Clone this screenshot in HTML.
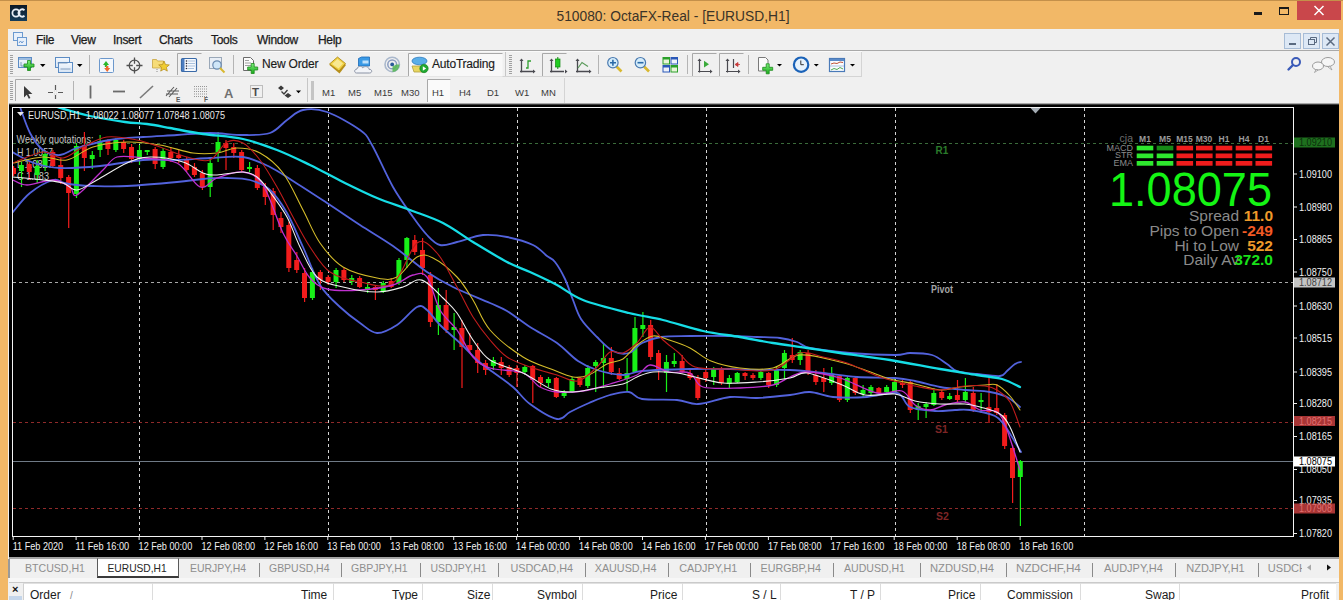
<!DOCTYPE html>
<html><head><meta charset="utf-8">
<style>
*{margin:0;padding:0;box-sizing:border-box}
html,body{width:1343px;height:600px;overflow:hidden;background:#f0f0f0;font-family:"Liberation Sans",sans-serif}
.a{position:absolute}
.t{position:absolute;white-space:nowrap;line-height:1}
#frame{left:0;top:0;width:1343px;height:600px;background:#f2b867}
#client{left:8px;top:29px;width:1331px;height:571px;background:#f0f0f0}
.menu{font-size:12px;color:#1b1b1b;top:34px;letter-spacing:-0.3px;-webkit-text-stroke:0.25px #1b1b1b}
.tbt{font-size:12px;color:#1b1b1b;letter-spacing:-0.2px;-webkit-text-stroke:0.15px #1b1b1b}
.tf{font-size:9.5px;color:#3a3a3a;top:88px;font-weight:normal}
.ax{font-size:10px;color:#fff;left:1299px}
.tm{font-size:10px;color:#fff;top:541px}
.tab{font-size:11.2px;color:#8c8c8c;top:563px;letter-spacing:-0.4px}
.hd{font-size:12px;color:#1b1b1b;top:589px}
.sep{position:absolute;width:1px;background:#c8c8c8}
.vs{position:absolute;width:1px;background:#dcdcdc;top:583px;height:17px}
.tsep{position:absolute;width:1px;height:14px;background:#8a8a8a;top:564px}
</style></head><body>
<div class="a" id="frame"></div>
<div class="a" style="left:0;top:0;width:1343px;height:1px;background:#c4904a"></div>
<svg class="a" style="left:0;top:0" width="1343" height="29"><text x="556.5" y="20.8" font-family="Liberation Sans" font-size="15.3" fill="#3a3328" textLength="233" lengthAdjust="spacingAndGlyphs">510080: OctaFX-Real - [EURUSD,H1]</text></svg>
<!-- app logo -->
<div class="a" style="left:10px;top:5px;width:17px;height:16px;background:linear-gradient(#0b1826,#163d5a)"></div>
<svg class="a" style="left:10px;top:5px" width="17" height="16"><circle cx="6" cy="8" r="3.6" fill="none" stroke="#e8eef5" stroke-width="1.8"/><path d="M14.5 5.2 A3.6 3.6 0 1 0 14.5 10.8" fill="none" stroke="#e8eef5" stroke-width="1.8"/></svg>
<!-- window controls -->
<div class="a" style="left:1254px;top:12px;width:8px;height:3px;background:#1a1a1a"></div>
<div class="a" style="left:1279px;top:7px;width:10px;height:8px;border:1px solid #1a1a1a;border-top-width:2px"></div>
<div class="a" style="left:1297px;top:1px;width:44px;height:19px;background:#c9474b"></div>
<svg class="a" style="left:1313px;top:5px" width="12" height="11"><path d="M1.5 1 L10.5 10 M10.5 1 L1.5 10" stroke="#fff" stroke-width="1.5"/></svg>

<div class="a" id="client"></div>
<!-- menu bar -->

<svg class="a" style="left:12px;top:31px" width="16" height="16"><rect x="1.5" y="1.5" width="9" height="8" fill="#e8f0fa" stroke="#6c9ad0"/><rect x="5.5" y="6.5" width="9" height="8" fill="#e8f0fa" stroke="#6c9ad0"/><path d="M7 12 l1.5 -2 l1.5 2 l1.5-2" stroke="#6c9ad0" fill="none"/></svg>
<div class="t menu" style="left:36px">File</div>
<div class="t menu" style="left:71px">View</div>
<div class="t menu" style="left:113px">Insert</div>
<div class="t menu" style="left:159px">Charts</div>
<div class="t menu" style="left:211px">Tools</div>
<div class="t menu" style="left:257px">Window</div>
<div class="t menu" style="left:318px">Help</div>
<div class="a" style="left:1284px;top:33px;width:17px;height:16px;background:#dde8f5;border:1px solid #a7bcd6"></div>
<div class="a" style="left:1303px;top:33px;width:17px;height:16px;background:#dde8f5;border:1px solid #a7bcd6"></div>
<div class="a" style="left:1322px;top:33px;width:17px;height:16px;background:#dde8f5;border:1px solid #a7bcd6"></div>
<div class="a" style="left:1289px;top:43px;width:7px;height:2px;background:#5a6a80"></div>
<svg class="a" style="left:1306px;top:35px" width="12" height="12"><rect x="2.5" y="4.5" width="6" height="5" fill="none" stroke="#5a6a80"/><path d="M4.5 4.5 V2.5 H10.5 V7.5 H8.5" fill="none" stroke="#5a6a80"/></svg>
<svg class="a" style="left:1325px;top:36px" width="11" height="11"><path d="M1.5 1.5 L9.5 9.5 M9.5 1.5 L1.5 9.5" stroke="#5a6a80" stroke-width="1.5"/></svg>

<!-- toolbars -->
<div class="a" style="left:8px;top:50px;width:1331px;height:53px;background:#f0f0f0"></div>
<div class="a" style="left:8px;top:50px;width:1331px;height:1px;background:#a9a9a9"></div>
<div class="a" style="left:8px;top:76px;width:854px;height:1px;background:#d4d4d4"></div>
<div class="a" style="left:861px;top:52px;width:1px;height:25px;background:#d4d4d4"></div>
<div class="a" style="left:564px;top:78px;width:1px;height:25px;background:#d4d4d4"></div>
<svg class="a" style="left:0;top:0" width="1343" height="104">
<defs>
<linearGradient id="gplus" x1="0" y1="0" x2="0" y2="1"><stop offset="0" stop-color="#7df07d"/><stop offset="1" stop-color="#18a818"/></linearGradient>
<linearGradient id="win" x1="0" y1="0" x2="0" y2="1"><stop offset="0" stop-color="#f4f8fd"/><stop offset="1" stop-color="#d6e4f4"/></linearGradient>
</defs>
<!-- toolbar row borders -->
<line x1="8" y1="51.5" x2="862" y2="51.5" stroke="#fafafa"/>
<line x1="505.5" y1="52" x2="505.5" y2="76" stroke="#c6c6c6"/>
<line x1="307.5" y1="78" x2="307.5" y2="102" stroke="#c6c6c6"/>
<!-- grips -->
<g stroke="#a0a0a0" stroke-width="1">
<path d="M10 55.5h3M10 57.5h3M10 59.5h3M10 61.5h3M10 63.5h3M10 65.5h3M10 67.5h3M10 69.5h3M10 71.5h3M10 73.5h3"/>
<path d="M509 55.5h3M509 57.5h3M509 59.5h3M509 61.5h3M509 63.5h3M509 65.5h3M509 67.5h3M509 69.5h3M509 71.5h3M509 73.5h3"/>
<path d="M10 81.5h3M10 83.5h3M10 85.5h3M10 87.5h3M10 89.5h3M10 91.5h3M10 93.5h3M10 95.5h3M10 97.5h3M10 99.5h3"/>
</g>
<rect x="311" y="81" width="3" height="19" fill="#c4c4c4"/>
<!-- separators -->
<g stroke="#b4b4b4"><line x1="89.5" y1="55" x2="89.5" y2="74"/><line x1="233.5" y1="55" x2="233.5" y2="74"/><line x1="598.5" y1="55" x2="598.5" y2="74"/><line x1="687.5" y1="55" x2="687.5" y2="74"/><line x1="748.5" y1="55" x2="748.5" y2="74"/><line x1="73.5" y1="81" x2="73.5" y2="100"/></g>
<!-- pressed boxes -->
<g fill="#f7f7f7" stroke="#a8a8a8">
<path d="M177.5 75V53.5H201.5" fill="none"/>
<rect x="408.5" y="53.5" width="94" height="23" fill="#f8f8f8" stroke="none"/><path d="M408.5 76V53.5H502.5" fill="none"/>
<path d="M542.5 76V53.5H566.5" fill="none"/>
<path d="M692.5 76V53.5H716.5" fill="none"/>
<path d="M719.5 76V53.5H743.5" fill="none"/>
<path d="M15.5 101V79.5H40.5" fill="none"/>
<rect x="428" y="80" width="22" height="22" fill="#fafafa" stroke="none"/><path d="M427.5 102V79.5H450.5" fill="none"/>
</g>
<!-- new chart -->
<rect x="18.5" y="57.5" width="13" height="10" fill="url(#win)" stroke="#5c8cc4"/>
<rect x="19" y="58" width="12" height="2" fill="#9cbce0"/>
<path d="M21 62v4h5" stroke="#6a8ab0" fill="none" stroke-width="0.8"/>
<path d="M27.5 60.5h3v3.5h3.5v3h-3.5v3.5h-3v-3.5h-3.5v-3h3.5z" fill="url(#gplus)" stroke="#1a8a1a" stroke-width="0.8"/>
<path d="M40 64h5.5l-2.75 3z" fill="#000"/>
<!-- profiles -->
<rect x="55.5" y="57.5" width="14" height="10" fill="url(#win)" stroke="#5c8cc4"/>
<rect x="58.5" y="62.5" width="14" height="10" fill="url(#win)" stroke="#5c8cc4"/>
<path d="M57.5 63h10M60.5 69h10" stroke="#6a8ab0" stroke-width="0.8"/>
<path d="M77 64h5.5l-2.75 3z" fill="#000"/>
<!-- market watch -->
<rect x="99.5" y="58.5" width="14" height="14" rx="1" fill="#f4f8fd" stroke="#6c98cc"/>
<path d="M103 65l3-4 3 4h-1.8v2h-2.4v-2z" fill="#2cb82c"/>
<path d="M106 66h2.4v2h1.8l-3 4-3-4h1.8z" fill="#f06a30"/>
<!-- crosshair -->
<circle cx="134.5" cy="65.5" r="5.3" fill="none" stroke="#505050" stroke-width="1.2"/>
<path d="M134.5 57.5v6.3M134.5 67.2v6.3M126.5 65.5h6.3M136.2 65.5h6.3" stroke="#505050" stroke-width="1.3"/>
<!-- folder star -->
<path d="M152.5 59.5h4l1 1.5h6v7h-11z" fill="#f6dc78" stroke="#c8a440" stroke-width="0.8"/>
<path d="M164 61l1.5 3.6 3.8.3-2.9 2.5.9 3.7-3.3-2-3.3 2 .9-3.7-2.9-2.5 3.8-.3z" fill="#f0cc30" stroke="#b89020" stroke-width="0.8"/>
<path d="M157 69v3" stroke="#8a8a8a" stroke-dasharray="1,1"/>
<!-- navigator -->
<rect x="181.5" y="58.5" width="15" height="13" rx="1" fill="#f6f9fd" stroke="#3a6aa8" stroke-width="1.2"/>
<rect x="182" y="59" width="2.5" height="12" fill="#4a7cc0"/>
<g fill="#223"><circle cx="186.5" cy="61" r="0.8"/><circle cx="186.5" cy="63.5" r="0.8"/><circle cx="186.5" cy="66" r="0.8"/><circle cx="186.5" cy="68.5" r="0.8"/></g>
<path d="M188 61h7M188 63.5h7M188 66h7M188 68.5h6" stroke="#8aaad0" stroke-width="0.7"/>
<!-- tester -->
<rect x="209.5" y="57.5" width="12" height="11" fill="#e8eef6" stroke="#9aa8b8"/>
<circle cx="217" cy="65" r="4.2" fill="#cfe6f8" stroke="#6a8ab0" stroke-width="1.2"/>
<path d="M220 68l4.5 4.5" stroke="#d8b830" stroke-width="2"/>
<!-- new order -->
<path d="M243.5 57.5h7l3 3v10h-10z" fill="#fbfbfb" stroke="#6a6a6a"/>
<path d="M245 60.5h4M245 63h6M245 65.5h6" stroke="#8a8a8a" stroke-width="0.8"/>
<path d="M251.2 63.5h3v3.5h3.5v3h-3.5v3.5h-3v-3.5h-3.5v-3h3.5z" fill="url(#gplus)" stroke="#1a8a1a" stroke-width="0.8"/>
<!-- metaeditor -->
<path d="M329.5 65l8-7.5 8.5 7.5-6.5 8.5z" fill="#b8901c"/>
<path d="M329.5 64l8-7 8 6.5-6.5 7.5z" fill="#f0d040" stroke="#a88418" stroke-width="0.8"/>
<path d="M332 64l5.5-5 5.5 4.5-4.5 5z" fill="#f8e890"/>
<!-- vps -->
<path d="M358.5 58.5l3-1.5h8v9h-11z" fill="#3a9ae6" stroke="#1a6ab8" stroke-width="0.8"/>
<path d="M362.5 60.5h6v3h-6z" fill="#bfe0fa"/>
<path d="M356.5 73c-2.5 0-2.5-4 .5-4c.5-3 4.5-3.5 5.8-1.2c1.8-2 6-1.5 6.2 1.5c3.5-.2 3.5 3.7 .5 3.7z" fill="#f2f4f8" stroke="#8a92a4"/>
<!-- signals -->
<circle cx="392.2" cy="64.4" r="7.2" fill="none" stroke="#aab8cc" stroke-width="1.6"/>
<circle cx="392.2" cy="64.4" r="4.4" fill="none" stroke="#8a9cc0" stroke-width="1.5"/>
<circle cx="392.2" cy="64.4" r="1.9" fill="#2a5a98"/>
<path d="M392.5 66.5v5.5a7.2 7.2 0 0 0 7 -7.5h-3.2" fill="#5ab85a" opacity="0.9"/>
<!-- autotrading icon -->
<path d="M412 66l2 6h11l2-6z" fill="#e8d660" stroke="#b0a040" stroke-width="0.8"/>
<ellipse cx="419.5" cy="61" rx="7.5" ry="3.8" fill="#5aaee8" stroke="#2a7ac0" stroke-width="0.8"/>
<circle cx="424" cy="68.5" r="4.2" fill="#20a830" stroke="#108020" stroke-width="0.6"/>
<path d="M422.8 66.3v4.4l3.4-2.2z" fill="#fff"/>
<!-- bar chart icon -->
<g stroke="#4a4a50" stroke-width="1.3" fill="none"><path d="M521.5 59.5v13M520 71.5h14"/><path d="M551.5 59.5v13M550 71.5h14"/><path d="M577.5 59.5v13M576 71.5h14"/></g>
<g fill="#4a4a50"><path d="M519.5 61l2-2.5 2 2.5z"/><path d="M533 69.5l2.5 2-2.5 2z"/><path d="M549.5 61l2-2.5 2 2.5z"/><path d="M565 69.5l2.5 2-2.5 2z"/><path d="M575.5 61l2-2.5 2 2.5z"/><path d="M589 69.5l2.5 2-2.5 2z"/></g>
<path d="M526 68h2v-7h3" stroke="#30a030" stroke-width="1.3" fill="none"/>
<path d="M557.8 57v12" stroke="#108a10"/><rect x="555.5" y="59" width="4.5" height="8" fill="#22cc22" stroke="#108a10" stroke-width="0.7"/>
<path d="M578 68l4-5.5 6 4" stroke="#5a9a5a" stroke-width="1.2" fill="none"/>
<!-- zoom -->
<path d="M616.5 66.5l5 5" stroke="#d8b830" stroke-width="2.6"/>
<circle cx="612.9" cy="62.7" r="5.2" fill="#d4ecfa" stroke="#4a7ab0" stroke-width="1.2"/>
<path d="M610 62.7h6M612.9 59.8v6" stroke="#2a6aa8" stroke-width="1.6"/>
<path d="M644 66.5l5 5" stroke="#d8b830" stroke-width="2.6"/>
<circle cx="640.4" cy="62.7" r="5.2" fill="#d4ecfa" stroke="#4a7ab0" stroke-width="1.2"/>
<path d="M637.5 62.7h6" stroke="#2a6aa8" stroke-width="1.6"/>
<!-- tile -->
<rect x="662.5" y="57" width="7.5" height="7.5" fill="#2aa02a"/><rect x="670.5" y="57" width="7.5" height="7.5" fill="#2a58b8"/>
<rect x="662.5" y="65" width="7.5" height="7.5" fill="#2a58b8"/><rect x="670.5" y="65" width="7.5" height="7.5" fill="#2aa02a"/>
<g fill="#e8f4d8"><rect x="663.5" y="59.5" width="5.5" height="4"/><rect x="671.5" y="67.5" width="5.5" height="4"/></g>
<g fill="#eef2fa"><rect x="671.5" y="59.5" width="5.5" height="4"/><rect x="663.5" y="67.5" width="5.5" height="4"/></g>
<!-- autoscroll / shift -->
<g stroke="#4a4a50" stroke-width="1.2" fill="none"><path d="M699.5 59.5v13M698 71.5h13"/><path d="M727.5 59.5v13M726 71.5h13"/><path d="M733.5 59v9"/></g>
<g fill="#4a4a50"><path d="M697.5 61l2-2.5 2 2.5z"/><path d="M710 69.5l2.5 2-2.5 2z"/><path d="M725.5 61l2-2.5 2 2.5z"/><path d="M738 69.5l2.5 2-2.5 2z"/></g>
<path d="M704 60.8v6.7l5-3.3z" fill="#3aaa3a"/>
<path d="M735 64.5l3-2v4z M737 64.5h3" fill="#c83a3a" stroke="#c83a3a" stroke-width="0.8"/>
<!-- indicators -->
<path d="M758.5 57.5h7l2.5 2.5v11h-9.5z" fill="#fbfbfb" stroke="#7a7a7a"/>
<path d="M766.2 63.8h3v3.5h3.5v3h-3.5v3.5h-3v-3.5h-3.5v-3h3.5z" fill="url(#gplus)" stroke="#1a8a1a" stroke-width="0.8"/>
<path d="M777 64h5l-2.5 2.6z" fill="#000"/>
<!-- clock -->
<circle cx="801.1" cy="64.7" r="7.2" fill="#e6f2fc" stroke="#1a62b8" stroke-width="2.2"/>
<path d="M800.8 60.5v4.2h3" stroke="#333" stroke-width="1" fill="none"/>
<path d="M813.8 64h5l-2.5 2.6z" fill="#000"/>
<!-- templates -->
<rect x="829.5" y="58.5" width="15" height="13" fill="#fafcff" stroke="#4a7ab8" stroke-width="1.2"/>
<rect x="830" y="59" width="14" height="2" fill="#5a8ac8"/>
<path d="M830 66h14" stroke="#9ab4d8" stroke-width="0.8"/>
<path d="M831 64l3-1 3 .5 3-1.5 3 .5" stroke="#b84020" fill="none" stroke-width="0.9"/>
<path d="M831 70l3-1.5 3 1 3-2 3 1.5" stroke="#40a040" fill="none" stroke-width="0.9"/>
<path d="M850 64h5l-2.5 2.6z" fill="#000"/>
<!-- right: search / chat -->
<circle cx="1296" cy="62" r="4" fill="none" stroke="#3a5ab8" stroke-width="2"/>
<path d="M1293 65l-4.5 4.5" stroke="#3a5ab8" stroke-width="2.4" stroke-linecap="round"/>
<ellipse cx="1328" cy="62" rx="6.5" ry="4.5" fill="#f6f6f6" stroke="#9a9a9a"/>
<path d="M1330 66l2 4-4-3z" fill="#f6f6f6" stroke="#9a9a9a" stroke-width="0.8"/>
<ellipse cx="1318" cy="66" rx="5.5" ry="4" fill="#f6f6f6" stroke="#9a9a9a"/>
<path d="M1316 69.5l-1.5 3 3.5-2.5z" fill="#f6f6f6" stroke="#9a9a9a" stroke-width="0.8"/>
<!-- row 2 -->
<path d="M24 86v11.5l2.8-2.8 2 4 1.6-.8-2-3.8h4z" fill="#3a3a3a"/>
<path d="M55.5 85v14M48 92.5h15" stroke="#5a5a5a" stroke-width="1.2"/>
<rect x="55" y="90" width="1" height="5" fill="#f0f0f0"/><rect x="53" y="92" width="5" height="1" fill="#f0f0f0"/>
<path d="M90.5 85.5v13" stroke="#6a6a6a" stroke-width="1.8"/>
<path d="M113 91.5h12" stroke="#6a6a6a" stroke-width="1.8"/>
<path d="M140 98l13-12" stroke="#7a7a7a" stroke-width="1.6"/>
<path d="M166 96l8-9M169 97l8-9M167 91h12M166 94h12" stroke="#5a5a5a" stroke-width="1.1"/>
<text x="176" y="101.5" font-family="Liberation Sans" font-size="6.5" font-weight="bold" fill="#5a5a5a">E</text>
<g stroke="#8a8a8a" stroke-width="0.9" stroke-dasharray="1,1"><path d="M194 86.5h13M194 89h13M194 91.5h13M194 94h13M194 96.5h13"/></g>
<text x="204" y="101.5" font-family="Liberation Sans" font-size="6.5" font-weight="bold" fill="#5a5a5a">F</text>
<text x="224" y="97.5" font-family="Liberation Sans" font-size="13" font-weight="bold" fill="#707070">A</text>
<rect x="250.5" y="85.5" width="12" height="12" fill="none" stroke="#8a8a8a" stroke-dasharray="1,1"/>
<text x="252" y="96" font-family="Liberation Sans" font-size="11.5" font-weight="bold" fill="#4a4a4a">T</text>
<path d="M278 88l3-2.5 3 2.5-3 2.5z M284.5 95.5l3.5-2.5 3.5 2.5-3.5 2.5z" fill="#3a3a3a"/>
<path d="M281.5 91.5l2.5 2.5 3.5-4" stroke="#3a3a3a" stroke-width="1.3" fill="none"/>
<path d="M296 90.5h5l-2.5 2.8z" fill="#000"/>
</svg>

<div class="t tbt" style="left:262px;top:58px">New Order</div>
<div class="t tbt" style="left:432px;top:58px">AutoTrading</div>
<div class="t tf" style="left:322px">M1</div>
<div class="t tf" style="left:348px">M5</div>
<div class="t tf" style="left:374px">M15</div>
<div class="t tf" style="left:401px">M30</div>
<div class="t tf" style="left:432px">H1</div>
<div class="t tf" style="left:459px">H4</div>
<div class="t tf" style="left:487px">D1</div>
<div class="t tf" style="left:515px">W1</div>
<div class="t tf" style="left:541px">MN</div>

<!-- chart -->
<div class="a" style="left:9px;top:103px;width:1330px;height:1px;background:#a8a8a8"></div><div class="a" style="left:9px;top:104px;width:1330px;height:1px;background:#3a3a3a"></div><div class="a" style="left:9px;top:105px;width:1330px;height:452px;background:#000"></div>
<svg class="a" style="left:0;top:0" width="1343" height="600" viewBox="0 0 1343 600">
<defs><clipPath id="cp"><rect x="13" y="107.5" width="1280" height="428"/></clipPath></defs>
<line x1="139.5" y1="108" x2="139.5" y2="536" stroke="#d4d4d4" stroke-width="1" stroke-dasharray="3,3"/>
<line x1="328.5" y1="108" x2="328.5" y2="536" stroke="#d4d4d4" stroke-width="1" stroke-dasharray="3,3"/>
<line x1="517.5" y1="108" x2="517.5" y2="536" stroke="#d4d4d4" stroke-width="1" stroke-dasharray="3,3"/>
<line x1="706.5" y1="108" x2="706.5" y2="536" stroke="#d4d4d4" stroke-width="1" stroke-dasharray="3,3"/>
<line x1="895.5" y1="108" x2="895.5" y2="536" stroke="#d4d4d4" stroke-width="1" stroke-dasharray="3,3"/>
<line x1="1084.5" y1="108" x2="1084.5" y2="536" stroke="#d4d4d4" stroke-width="1" stroke-dasharray="3,3"/>
<line x1="13" y1="143.5" x2="1293" y2="143.5" stroke="#3a6a3a" stroke-dasharray="3,3"/>
<line x1="13" y1="282.5" x2="1293" y2="282.5" stroke="#a8a8a8" stroke-dasharray="3,3"/>
<line x1="13" y1="422.5" x2="1293" y2="422.5" stroke="#8f2a2a" stroke-dasharray="3,3"/>
<line x1="13" y1="508.5" x2="1293" y2="508.5" stroke="#8f2a2a" stroke-dasharray="3,3"/>
<line x1="13" y1="461.5" x2="1293" y2="461.5" stroke="#6f7a86" stroke-width="1.2"/>
<text x="935.5" y="153.5" font-size="10" font-weight="bold" fill="#2a7a2a" font-family="Liberation Sans">R1</text>
<text x="931" y="293" font-size="10" font-weight="bold" fill="#a4a4a4" font-family="Liberation Sans" textLength="22" lengthAdjust="spacingAndGlyphs">Pivot</text>
<text x="935" y="433" font-size="10.5" font-weight="bold" fill="#7e2626" font-family="Liberation Sans">S1</text>
<text x="936" y="520" font-size="10.5" font-weight="bold" fill="#7e2626" font-family="Liberation Sans">S2</text>
<g font-family="Liberation Sans" font-size="10.5" fill="#c4c4c4"><text x="16.5" y="143.3" textLength="77" lengthAdjust="spacingAndGlyphs">Weekly quotations:</text><text x="17" y="155.5" textLength="36" lengthAdjust="spacingAndGlyphs">H 1.0957</text><text x="17" y="167.5" textLength="36" lengthAdjust="spacingAndGlyphs">L 1.0827</text><text x="17" y="179.5" textLength="32" lengthAdjust="spacingAndGlyphs">C 1.083</text></g>
<g clip-path="url(#cp)">
<rect x="13.0" y="166" width="1.2" height="10" fill="#f21c1c"/>
<rect x="11.0" y="168" width="5" height="6" fill="#f21c1c"/>
<rect x="20.9" y="162" width="1.2" height="25" fill="#18f018"/>
<rect x="18.9" y="165" width="5" height="6" fill="#18f018"/>
<rect x="28.7" y="161" width="1.2" height="19" fill="#f21c1c"/>
<rect x="26.7" y="164" width="5" height="8" fill="#f21c1c"/>
<rect x="36.6" y="160" width="1.2" height="23" fill="#18f018"/>
<rect x="34.6" y="166" width="5" height="9" fill="#18f018"/>
<rect x="44.5" y="150" width="1.2" height="21" fill="#18f018"/>
<rect x="42.5" y="154" width="5" height="12" fill="#18f018"/>
<rect x="52.3" y="150" width="1.2" height="18" fill="#f21c1c"/>
<rect x="50.3" y="152" width="5" height="14" fill="#f21c1c"/>
<rect x="60.2" y="158" width="1.2" height="26" fill="#f21c1c"/>
<rect x="58.2" y="165" width="5" height="13" fill="#f21c1c"/>
<rect x="68.1" y="175" width="1.2" height="53" fill="#f21c1c"/>
<rect x="66.1" y="177" width="5" height="16" fill="#f21c1c"/>
<rect x="75.9" y="143" width="1.2" height="55" fill="#18f018"/>
<rect x="73.9" y="146" width="5" height="48" fill="#18f018"/>
<rect x="83.8" y="132" width="1.2" height="39" fill="#f21c1c"/>
<rect x="81.8" y="145" width="5" height="13" fill="#f21c1c"/>
<rect x="91.7" y="151" width="1.2" height="18" fill="#18f018"/>
<rect x="89.7" y="155" width="5" height="4" fill="#18f018"/>
<rect x="99.5" y="135" width="1.2" height="22" fill="#18f018"/>
<rect x="97.5" y="141" width="5" height="9" fill="#18f018"/>
<rect x="107.4" y="139" width="1.2" height="16" fill="#f21c1c"/>
<rect x="105.4" y="141" width="5" height="8" fill="#f21c1c"/>
<rect x="115.3" y="138" width="1.2" height="14" fill="#18f018"/>
<rect x="113.3" y="140" width="5" height="10" fill="#18f018"/>
<rect x="123.1" y="140" width="1.2" height="13" fill="#f21c1c"/>
<rect x="121.1" y="142" width="5" height="7" fill="#f21c1c"/>
<rect x="131.0" y="144" width="1.2" height="19" fill="#f21c1c"/>
<rect x="129.0" y="147" width="5" height="12" fill="#f21c1c"/>
<rect x="138.9" y="145" width="1.2" height="20" fill="#18f018"/>
<rect x="136.9" y="150" width="5" height="9" fill="#18f018"/>
<rect x="146.7" y="150" width="1.2" height="5" fill="#18f018"/>
<rect x="144.7" y="150" width="5" height="2" fill="#18f018"/>
<rect x="154.6" y="147" width="1.2" height="22" fill="#f21c1c"/>
<rect x="152.6" y="149" width="5" height="15" fill="#f21c1c"/>
<rect x="162.5" y="148" width="1.2" height="21" fill="#18f018"/>
<rect x="160.5" y="151" width="5" height="16" fill="#18f018"/>
<rect x="170.3" y="147" width="1.2" height="15" fill="#f21c1c"/>
<rect x="168.3" y="152" width="5" height="6" fill="#f21c1c"/>
<rect x="178.2" y="150" width="1.2" height="13" fill="#f21c1c"/>
<rect x="176.2" y="155" width="5" height="3" fill="#f21c1c"/>
<rect x="186.1" y="157" width="1.2" height="15" fill="#f21c1c"/>
<rect x="184.1" y="160" width="5" height="10" fill="#f21c1c"/>
<rect x="193.9" y="163" width="1.2" height="14" fill="#f21c1c"/>
<rect x="191.9" y="167" width="5" height="8" fill="#f21c1c"/>
<rect x="201.8" y="170" width="1.2" height="20" fill="#f21c1c"/>
<rect x="199.8" y="173" width="5" height="14" fill="#f21c1c"/>
<rect x="209.6" y="158" width="1.2" height="39" fill="#18f018"/>
<rect x="207.6" y="163" width="5" height="24" fill="#18f018"/>
<rect x="217.5" y="132" width="1.2" height="30" fill="#18f018"/>
<rect x="215.5" y="142" width="5" height="10" fill="#18f018"/>
<rect x="225.4" y="140" width="1.2" height="30" fill="#f21c1c"/>
<rect x="223.4" y="143" width="5" height="5" fill="#f21c1c"/>
<rect x="233.2" y="143" width="1.2" height="15" fill="#f21c1c"/>
<rect x="231.2" y="147" width="5" height="6" fill="#f21c1c"/>
<rect x="241.1" y="150" width="1.2" height="22" fill="#f21c1c"/>
<rect x="239.1" y="152" width="5" height="18" fill="#f21c1c"/>
<rect x="249.0" y="162" width="1.2" height="10" fill="#18f018"/>
<rect x="247.0" y="167" width="5" height="2" fill="#18f018"/>
<rect x="256.8" y="165" width="1.2" height="25" fill="#f21c1c"/>
<rect x="254.8" y="168" width="5" height="20" fill="#f21c1c"/>
<rect x="264.7" y="183" width="1.2" height="22" fill="#f21c1c"/>
<rect x="262.7" y="187" width="5" height="10" fill="#f21c1c"/>
<rect x="272.6" y="188" width="1.2" height="42" fill="#f21c1c"/>
<rect x="270.6" y="191" width="5" height="24" fill="#f21c1c"/>
<rect x="280.4" y="212" width="1.2" height="21" fill="#f21c1c"/>
<rect x="278.4" y="218" width="5" height="9" fill="#f21c1c"/>
<rect x="288.3" y="222" width="1.2" height="50" fill="#f21c1c"/>
<rect x="286.3" y="225" width="5" height="43" fill="#f21c1c"/>
<rect x="296.2" y="252" width="1.2" height="21" fill="#f21c1c"/>
<rect x="294.2" y="260" width="5" height="10" fill="#f21c1c"/>
<rect x="304.0" y="268" width="1.2" height="34" fill="#f21c1c"/>
<rect x="302.0" y="273" width="5" height="25" fill="#f21c1c"/>
<rect x="311.9" y="268" width="1.2" height="32" fill="#18f018"/>
<rect x="309.9" y="272" width="5" height="26" fill="#18f018"/>
<rect x="319.8" y="270" width="1.2" height="20" fill="#f21c1c"/>
<rect x="317.8" y="272" width="5" height="8" fill="#f21c1c"/>
<rect x="327.6" y="275" width="1.2" height="10" fill="#f21c1c"/>
<rect x="325.6" y="277" width="5" height="5" fill="#f21c1c"/>
<rect x="335.5" y="268" width="1.2" height="20" fill="#18f018"/>
<rect x="333.5" y="270" width="5" height="12" fill="#18f018"/>
<rect x="343.4" y="268" width="1.2" height="14" fill="#f21c1c"/>
<rect x="341.4" y="270" width="5" height="10" fill="#f21c1c"/>
<rect x="351.2" y="275" width="1.2" height="10" fill="#18f018"/>
<rect x="349.2" y="278" width="5" height="4" fill="#18f018"/>
<rect x="359.1" y="276" width="1.2" height="12" fill="#f21c1c"/>
<rect x="357.1" y="278" width="5" height="9" fill="#f21c1c"/>
<rect x="367.0" y="282" width="1.2" height="11" fill="#18f018"/>
<rect x="365.0" y="287" width="5" height="2" fill="#18f018"/>
<rect x="374.8" y="285" width="1.2" height="15" fill="#f21c1c"/>
<rect x="372.8" y="287" width="5" height="3" fill="#f21c1c"/>
<rect x="382.7" y="281" width="1.2" height="12" fill="#18f018"/>
<rect x="380.7" y="283" width="5" height="9" fill="#18f018"/>
<rect x="390.6" y="278" width="1.2" height="10" fill="#f21c1c"/>
<rect x="388.6" y="281" width="5" height="6" fill="#f21c1c"/>
<rect x="398.4" y="258" width="1.2" height="27" fill="#18f018"/>
<rect x="396.4" y="260" width="5" height="23" fill="#18f018"/>
<rect x="406.3" y="237" width="1.2" height="31" fill="#18f018"/>
<rect x="404.3" y="238" width="5" height="22" fill="#18f018"/>
<rect x="414.2" y="235" width="1.2" height="20" fill="#f21c1c"/>
<rect x="412.2" y="240" width="5" height="12" fill="#f21c1c"/>
<rect x="422.0" y="238" width="1.2" height="37" fill="#f21c1c"/>
<rect x="420.0" y="250" width="5" height="18" fill="#f21c1c"/>
<rect x="429.9" y="272" width="1.2" height="55" fill="#f21c1c"/>
<rect x="427.9" y="275" width="5" height="47" fill="#f21c1c"/>
<rect x="437.8" y="288" width="1.2" height="47" fill="#18f018"/>
<rect x="435.8" y="305" width="5" height="17" fill="#18f018"/>
<rect x="445.6" y="290" width="1.2" height="43" fill="#f21c1c"/>
<rect x="443.6" y="305" width="5" height="25" fill="#f21c1c"/>
<rect x="453.5" y="313" width="1.2" height="37" fill="#18f018"/>
<rect x="451.5" y="327" width="5" height="3" fill="#18f018"/>
<rect x="461.4" y="320" width="1.2" height="68" fill="#f21c1c"/>
<rect x="459.4" y="328" width="5" height="19" fill="#f21c1c"/>
<rect x="469.2" y="333" width="1.2" height="19" fill="#f21c1c"/>
<rect x="467.2" y="345" width="5" height="5" fill="#f21c1c"/>
<rect x="477.1" y="343" width="1.2" height="30" fill="#f21c1c"/>
<rect x="475.1" y="350" width="5" height="13" fill="#f21c1c"/>
<rect x="485.0" y="360" width="1.2" height="15" fill="#f21c1c"/>
<rect x="483.0" y="363" width="5" height="7" fill="#f21c1c"/>
<rect x="492.8" y="357" width="1.2" height="13" fill="#18f018"/>
<rect x="490.8" y="360" width="5" height="6" fill="#18f018"/>
<rect x="500.7" y="357" width="1.2" height="18" fill="#f21c1c"/>
<rect x="498.7" y="362" width="5" height="6" fill="#f21c1c"/>
<rect x="508.6" y="365" width="1.2" height="12" fill="#f21c1c"/>
<rect x="506.6" y="367" width="5" height="8" fill="#f21c1c"/>
<rect x="516.4" y="365" width="1.2" height="22" fill="#f21c1c"/>
<rect x="514.4" y="368" width="5" height="5" fill="#f21c1c"/>
<rect x="524.3" y="365" width="1.2" height="10" fill="#18f018"/>
<rect x="522.3" y="367" width="5" height="5" fill="#18f018"/>
<rect x="532.2" y="365" width="1.2" height="38" fill="#f21c1c"/>
<rect x="530.2" y="366" width="5" height="14" fill="#f21c1c"/>
<rect x="540.0" y="375" width="1.2" height="12" fill="#f21c1c"/>
<rect x="538.0" y="377" width="5" height="6" fill="#f21c1c"/>
<rect x="547.9" y="377" width="1.2" height="10" fill="#18f018"/>
<rect x="545.9" y="379" width="5" height="4" fill="#18f018"/>
<rect x="555.8" y="377" width="1.2" height="21" fill="#f21c1c"/>
<rect x="553.8" y="378" width="5" height="19" fill="#f21c1c"/>
<rect x="563.6" y="390" width="1.2" height="8" fill="#18f018"/>
<rect x="561.6" y="392" width="5" height="4" fill="#18f018"/>
<rect x="571.5" y="377" width="1.2" height="16" fill="#18f018"/>
<rect x="569.5" y="379" width="5" height="13" fill="#18f018"/>
<rect x="579.4" y="377" width="1.2" height="10" fill="#f21c1c"/>
<rect x="577.4" y="378" width="5" height="7" fill="#f21c1c"/>
<rect x="587.2" y="365" width="1.2" height="23" fill="#18f018"/>
<rect x="585.2" y="368" width="5" height="18" fill="#18f018"/>
<rect x="595.1" y="360" width="1.2" height="32" fill="#18f018"/>
<rect x="593.1" y="362" width="5" height="4" fill="#18f018"/>
<rect x="602.9" y="343" width="1.2" height="45" fill="#18f018"/>
<rect x="600.9" y="358" width="5" height="5" fill="#18f018"/>
<rect x="610.8" y="347" width="1.2" height="28" fill="#f21c1c"/>
<rect x="608.8" y="358" width="5" height="14" fill="#f21c1c"/>
<rect x="618.7" y="368" width="1.2" height="12" fill="#f21c1c"/>
<rect x="616.7" y="373" width="5" height="6" fill="#f21c1c"/>
<rect x="626.5" y="358" width="1.2" height="34" fill="#18f018"/>
<rect x="624.5" y="373" width="5" height="6" fill="#18f018"/>
<rect x="634.4" y="317" width="1.2" height="56" fill="#18f018"/>
<rect x="632.4" y="328" width="5" height="44" fill="#18f018"/>
<rect x="642.3" y="312" width="1.2" height="25" fill="#18f018"/>
<rect x="640.3" y="325" width="5" height="4" fill="#18f018"/>
<rect x="650.1" y="320" width="1.2" height="40" fill="#f21c1c"/>
<rect x="648.1" y="325" width="5" height="32" fill="#f21c1c"/>
<rect x="658.0" y="350" width="1.2" height="30" fill="#f21c1c"/>
<rect x="656.0" y="353" width="5" height="17" fill="#f21c1c"/>
<rect x="665.9" y="355" width="1.2" height="37" fill="#18f018"/>
<rect x="663.9" y="362" width="5" height="11" fill="#18f018"/>
<rect x="673.7" y="353" width="1.2" height="14" fill="#18f018"/>
<rect x="671.7" y="361" width="5" height="3" fill="#18f018"/>
<rect x="681.6" y="355" width="1.2" height="18" fill="#f21c1c"/>
<rect x="679.6" y="361" width="5" height="11" fill="#f21c1c"/>
<rect x="689.5" y="370" width="1.2" height="10" fill="#f21c1c"/>
<rect x="687.5" y="373" width="5" height="5" fill="#f21c1c"/>
<rect x="697.3" y="375" width="1.2" height="25" fill="#f21c1c"/>
<rect x="695.3" y="378" width="5" height="20" fill="#f21c1c"/>
<rect x="705.2" y="368" width="1.2" height="14" fill="#f21c1c"/>
<rect x="703.2" y="372" width="5" height="6" fill="#f21c1c"/>
<rect x="713.1" y="367" width="1.2" height="18" fill="#18f018"/>
<rect x="711.1" y="369" width="5" height="8" fill="#18f018"/>
<rect x="720.9" y="367" width="1.2" height="18" fill="#f21c1c"/>
<rect x="718.9" y="368" width="5" height="15" fill="#f21c1c"/>
<rect x="728.8" y="375" width="1.2" height="13" fill="#18f018"/>
<rect x="726.8" y="378" width="5" height="6" fill="#18f018"/>
<rect x="736.7" y="372" width="1.2" height="11" fill="#18f018"/>
<rect x="734.7" y="373" width="5" height="9" fill="#18f018"/>
<rect x="744.5" y="372" width="1.2" height="8" fill="#f21c1c"/>
<rect x="742.5" y="373" width="5" height="3" fill="#f21c1c"/>
<rect x="752.4" y="373" width="1.2" height="7" fill="#f21c1c"/>
<rect x="750.4" y="375" width="5" height="3" fill="#f21c1c"/>
<rect x="760.3" y="370" width="1.2" height="10" fill="#18f018"/>
<rect x="758.3" y="372" width="5" height="6" fill="#18f018"/>
<rect x="768.1" y="372" width="1.2" height="16" fill="#f21c1c"/>
<rect x="766.1" y="373" width="5" height="12" fill="#f21c1c"/>
<rect x="776.0" y="367" width="1.2" height="20" fill="#18f018"/>
<rect x="774.0" y="370" width="5" height="15" fill="#18f018"/>
<rect x="783.9" y="350" width="1.2" height="30" fill="#18f018"/>
<rect x="781.9" y="353" width="5" height="15" fill="#18f018"/>
<rect x="791.7" y="338" width="1.2" height="25" fill="#f21c1c"/>
<rect x="789.7" y="355" width="5" height="5" fill="#f21c1c"/>
<rect x="799.6" y="350" width="1.2" height="15" fill="#18f018"/>
<rect x="797.6" y="352" width="5" height="8" fill="#18f018"/>
<rect x="807.5" y="350" width="1.2" height="25" fill="#f21c1c"/>
<rect x="805.5" y="353" width="5" height="20" fill="#f21c1c"/>
<rect x="815.3" y="370" width="1.2" height="15" fill="#f21c1c"/>
<rect x="813.3" y="375" width="5" height="7" fill="#f21c1c"/>
<rect x="823.2" y="368" width="1.2" height="24" fill="#f21c1c"/>
<rect x="821.2" y="378" width="5" height="4" fill="#f21c1c"/>
<rect x="831.1" y="367" width="1.2" height="18" fill="#18f018"/>
<rect x="829.1" y="375" width="5" height="8" fill="#18f018"/>
<rect x="838.9" y="375" width="1.2" height="27" fill="#f21c1c"/>
<rect x="836.9" y="376" width="5" height="24" fill="#f21c1c"/>
<rect x="846.8" y="377" width="1.2" height="25" fill="#18f018"/>
<rect x="844.8" y="378" width="5" height="22" fill="#18f018"/>
<rect x="854.7" y="377" width="1.2" height="18" fill="#f21c1c"/>
<rect x="852.7" y="378" width="5" height="15" fill="#f21c1c"/>
<rect x="862.5" y="385" width="1.2" height="12" fill="#18f018"/>
<rect x="860.5" y="390" width="5" height="4" fill="#18f018"/>
<rect x="870.4" y="385" width="1.2" height="10" fill="#18f018"/>
<rect x="868.4" y="387" width="5" height="6" fill="#18f018"/>
<rect x="878.3" y="387" width="1.2" height="7" fill="#f21c1c"/>
<rect x="876.3" y="388" width="5" height="5" fill="#f21c1c"/>
<rect x="886.1" y="385" width="1.2" height="8" fill="#18f018"/>
<rect x="884.1" y="387" width="5" height="5" fill="#18f018"/>
<rect x="894.0" y="379" width="1.2" height="14" fill="#18f018"/>
<rect x="892.0" y="382" width="5" height="10" fill="#18f018"/>
<rect x="901.9" y="380" width="1.2" height="8" fill="#f21c1c"/>
<rect x="899.9" y="383" width="5" height="2" fill="#f21c1c"/>
<rect x="909.7" y="380" width="1.2" height="33" fill="#f21c1c"/>
<rect x="907.7" y="382" width="5" height="28" fill="#f21c1c"/>
<rect x="917.6" y="403" width="1.2" height="17" fill="#18f018"/>
<rect x="915.6" y="406" width="5" height="4" fill="#18f018"/>
<rect x="925.5" y="402" width="1.2" height="16" fill="#18f018"/>
<rect x="923.5" y="404" width="5" height="3" fill="#18f018"/>
<rect x="933.3" y="388" width="1.2" height="18" fill="#18f018"/>
<rect x="931.3" y="393" width="5" height="12" fill="#18f018"/>
<rect x="941.2" y="390" width="1.2" height="10" fill="#f21c1c"/>
<rect x="939.2" y="392" width="5" height="6" fill="#f21c1c"/>
<rect x="949.1" y="393" width="1.2" height="7" fill="#18f018"/>
<rect x="947.1" y="396" width="5" height="3" fill="#18f018"/>
<rect x="956.9" y="380" width="1.2" height="22" fill="#f21c1c"/>
<rect x="954.9" y="395" width="5" height="5" fill="#f21c1c"/>
<rect x="964.8" y="378" width="1.2" height="25" fill="#18f018"/>
<rect x="962.8" y="392" width="5" height="8" fill="#18f018"/>
<rect x="972.7" y="387" width="1.2" height="25" fill="#f21c1c"/>
<rect x="970.7" y="393" width="5" height="17" fill="#f21c1c"/>
<rect x="980.5" y="393" width="1.2" height="20" fill="#18f018"/>
<rect x="978.5" y="400" width="5" height="2" fill="#18f018"/>
<rect x="988.4" y="378" width="1.2" height="45" fill="#f21c1c"/>
<rect x="986.4" y="407" width="5" height="5" fill="#f21c1c"/>
<rect x="996.2" y="384" width="1.2" height="31" fill="#f21c1c"/>
<rect x="994.2" y="408" width="5" height="5" fill="#f21c1c"/>
<rect x="1004.1" y="413" width="1.2" height="36" fill="#f21c1c"/>
<rect x="1002.1" y="415" width="5" height="31" fill="#f21c1c"/>
<rect x="1012.0" y="445" width="1.2" height="58" fill="#f21c1c"/>
<rect x="1010.0" y="448" width="5" height="30" fill="#f21c1c"/>
<rect x="1019.8" y="460" width="1.2" height="66" fill="#18f018"/>
<rect x="1017.8" y="461" width="5" height="16" fill="#18f018"/>
<path d="M20,107 C21.7,111.3 26.2,125.8 30,133 C33.8,140.2 38.0,146.3 43,150 C48.0,153.7 54.3,155.3 60,155 C65.7,154.7 68.7,150.5 77,148 C85.3,145.5 99.0,141.8 110,140 C121.0,138.2 131.8,137.8 143,137 C154.2,136.2 165.8,135.7 177,135 C188.2,134.3 199.0,133.0 210,133 C221.0,133.0 233.0,135.0 243,135 C253.0,135.0 262.7,135.5 270,133 C277.3,130.5 281.5,123.8 287,120 C292.5,116.2 296.3,111.3 303,110 C309.7,108.7 317.5,108.7 327,112 C336.5,115.3 352.5,124.5 360,130 C367.5,135.5 366.5,135.5 372,145 C377.5,154.5 386.2,175.0 393,187 C399.8,199.0 407.3,209.0 413,217 C418.7,225.0 422.5,230.3 427,235 C431.5,239.7 435.0,243.8 440,245 C445.0,246.2 449.8,243.7 457,242 C464.2,240.3 474.7,235.8 483,235 C491.3,234.2 498.7,235.3 507,237 C515.3,238.7 526.3,241.8 533,245 C539.7,248.2 543.3,253.2 547,256 C550.7,258.8 552.0,258.2 555,262 C558.0,265.8 562.0,272.7 565,279 C568.0,285.3 570.3,293.3 573,300 C575.7,306.7 577.0,312.8 581,319 C585.0,325.2 591.7,331.7 597,337 C602.3,342.3 607.7,348.3 613,351 C618.3,353.7 624.2,354.3 629,353 C633.8,351.7 636.7,345.7 642,343 C647.3,340.3 653.0,338.2 661,337 C669.0,335.8 678.5,336.2 690,336 C701.5,335.8 718.8,335.8 730,336 C741.2,336.2 748.7,336.7 757,337 C765.3,337.3 773.3,337.2 780,338 C786.7,338.8 792.0,340.3 797,342 C802.0,343.7 801.2,346.2 810,348 C818.8,349.8 835.8,351.8 850,353 C864.2,354.2 885.0,355.0 895,355 C905.0,355.0 903.8,353.0 910,353 C916.2,353.0 925.8,353.2 932,355 C938.2,356.8 942.8,361.3 947,364 C951.2,366.7 952.0,369.3 957,371 C962.0,372.7 969.8,373.2 977,374 C984.2,374.8 995.0,376.5 1000,376 C1005.0,375.5 1004.5,373.0 1007,371 C1009.5,369.0 1012.7,365.5 1015,364 C1017.3,362.5 1020.0,362.3 1021,362" fill="none" stroke="#5262dc" stroke-width="1.8" stroke-linejoin="round" stroke-linecap="round"/>
<path d="M12,152 C15.7,153.8 26.0,160.3 34,163 C42.0,165.7 49.0,167.5 60,168 C71.0,168.5 86.2,167.3 100,166 C113.8,164.7 130.2,161.0 143,160 C155.8,159.0 165.8,160.3 177,160 C188.2,159.7 199.0,158.5 210,158 C221.0,157.5 233.0,155.5 243,157 C253.0,158.5 261.7,163.0 270,167 C278.3,171.0 283.5,175.0 293,181 C302.5,187.0 315.8,195.7 327,203 C338.2,210.3 349.0,217.8 360,225 C371.0,232.2 381.8,238.2 393,246 C404.2,253.8 417.0,265.2 427,272 C437.0,278.8 442.5,281.8 453,287 C463.5,292.2 481.0,299.0 490,303 C499.0,307.0 500.3,307.0 507,311 C513.7,315.0 521.7,321.7 530,327 C538.3,332.3 549.0,337.3 557,343 C565.0,348.7 571.3,356.5 578,361 C584.7,365.5 589.5,367.7 597,370 C604.5,372.3 615.5,374.8 623,375 C630.5,375.2 630.8,372.0 642,371 C653.2,370.0 675.3,369.3 690,369 C704.7,368.7 718.8,368.8 730,369 C741.2,369.2 747.0,369.8 757,370 C767.0,370.2 779.0,369.5 790,370 C801.0,370.5 811.8,371.8 823,373 C834.2,374.2 845.0,376.2 857,377 C869.0,377.8 885.3,377.3 895,378 C904.7,378.7 907.5,379.5 915,381 C922.5,382.5 931.7,385.5 940,387 C948.3,388.5 956.7,389.2 965,390 C973.3,390.8 983.0,390.8 990,392 C997.0,393.2 1002.0,394.5 1007,397 C1012.0,399.5 1017.8,405.3 1020,407" fill="none" stroke="#5262dc" stroke-width="1.8" stroke-linejoin="round" stroke-linecap="round"/>
<path d="M13,212 C15.8,208.8 23.3,198.3 30,193 C36.7,187.7 47.3,181.7 53,180 C58.7,178.3 60.0,182.2 64,183 C68.0,183.8 72.2,184.5 77,185 C81.8,185.5 84.7,185.8 93,186 C101.3,186.2 113.0,186.7 127,186 C141.0,185.3 164.3,183.2 177,182 C189.7,180.8 194.7,179.7 203,179 C211.3,178.3 219.2,177.8 227,178 C234.8,178.2 242.8,178.0 250,180 C257.2,182.0 263.8,184.5 270,190 C276.2,195.5 281.5,203.5 287,213 C292.5,222.5 297.5,235.0 303,247 C308.5,259.0 313.8,275.0 320,285 C326.2,295.0 333.3,300.7 340,307 C346.7,313.3 353.8,318.7 360,323 C366.2,327.3 370.8,332.7 377,333 C383.2,333.3 390.3,329.3 397,325 C403.7,320.7 412.0,309.5 417,307 C422.0,304.5 423.2,307.0 427,310 C430.8,313.0 434.5,319.5 440,325 C445.5,330.5 453.8,337.2 460,343 C466.2,348.8 472.0,355.5 477,360 C482.0,364.5 484.0,365.5 490,370 C496.0,374.5 506.3,381.3 513,387 C519.7,392.7 522.7,398.7 530,404 C537.3,409.3 550.3,417.7 557,419 C563.7,420.3 564.7,414.7 570,412 C575.3,409.3 582.3,405.8 589,403 C595.7,400.2 603.3,396.8 610,395 C616.7,393.2 623.7,391.3 629,392 C634.3,392.7 634.0,397.7 642,399 C650.0,400.3 667.7,399.2 677,400 C686.3,400.8 689.2,404.5 698,404 C706.8,403.5 720.2,398.0 730,397 C739.8,396.0 747.0,398.3 757,398 C767.0,397.7 781.2,396.0 790,395 C798.8,394.0 802.8,391.7 810,392 C817.2,392.3 823.5,396.2 833,397 C842.5,397.8 856.3,397.7 867,397 C877.7,396.3 889.8,391.3 897,393 C904.2,394.7 903.7,404.0 910,407 C916.3,410.0 927.5,410.5 935,411 C942.5,411.5 949.2,410.2 955,410 C960.8,409.8 963.3,409.0 970,410 C976.7,411.0 989.2,413.3 995,416 C1000.8,418.7 1001.7,421.7 1005,426 C1008.3,430.3 1012.3,437.7 1015,442 C1017.7,446.3 1020.0,450.3 1021,452" fill="none" stroke="#5262dc" stroke-width="1.8" stroke-linejoin="round" stroke-linecap="round"/>
<path d="M13,163 C18.0,162.0 34.0,157.5 43,157 C52.0,156.5 58.7,161.7 67,160 C75.3,158.3 83.0,150.0 93,147 C103.0,144.0 115.8,142.3 127,142 C138.2,141.7 149.0,143.2 160,145 C171.0,146.8 183.5,151.7 193,153 C202.5,154.3 209.7,153.8 217,153 C224.3,152.2 229.8,148.0 237,148 C244.2,148.0 252.3,148.8 260,153 C267.7,157.2 275.8,163.5 283,173 C290.2,182.5 296.8,198.3 303,210 C309.2,221.7 313.3,233.5 320,243 C326.7,252.5 333.5,261.2 343,267 C352.5,272.8 368.0,276.3 377,278 C386.0,279.7 390.3,280.5 397,277 C403.7,273.5 411.0,260.2 417,257 C423.0,253.8 426.3,254.7 433,258 C439.7,261.3 450.3,270.0 457,277 C463.7,284.0 467.5,291.2 473,300 C478.5,308.8 481.7,320.5 490,330 C498.3,339.5 512.8,350.5 523,357 C533.2,363.5 542.7,365.7 551,369 C559.3,372.3 566.7,376.0 573,377 C579.3,378.0 583.3,377.2 589,375 C594.7,372.8 601.3,366.7 607,364 C612.7,361.3 618.0,362.2 623,359 C628.0,355.8 632.0,348.8 637,345 C642.0,341.2 647.7,336.8 653,336 C658.3,335.2 662.8,338.0 669,340 C675.2,342.0 683.0,344.5 690,348 C697.0,351.5 702.7,357.7 711,361 C719.3,364.3 729.7,366.8 740,368 C750.3,369.2 763.0,370.2 773,368 C783.0,365.8 788.8,356.0 800,355 C811.2,354.0 829.2,359.5 840,362 C850.8,364.5 856.7,367.2 865,370 C873.3,372.8 881.7,376.7 890,379 C898.3,381.3 906.7,382.2 915,384 C923.3,385.8 932.5,389.5 940,390 C947.5,390.5 952.5,387.8 960,387 C967.5,386.2 978.8,385.3 985,385 C991.2,384.7 992.8,383.2 997,385 C1001.2,386.8 1006.2,391.8 1010,396 C1013.8,400.2 1018.3,407.7 1020,410" fill="none" stroke="#d4bc2a" stroke-width="1.1" stroke-linejoin="round" stroke-linecap="round"/>
<path d="M13,163 C18.0,161.2 34.7,152.8 43,152 C51.3,151.2 56.3,158.8 63,158 C69.7,157.2 75.7,150.5 83,147 C90.3,143.5 98.0,138.2 107,137 C116.0,135.8 128.2,138.3 137,140 C145.8,141.7 151.7,144.2 160,147 C168.3,149.8 178.7,154.8 187,157 C195.3,159.2 203.3,162.5 210,160 C216.7,157.5 221.5,144.8 227,142 C232.5,139.2 237.5,140.0 243,143 C248.5,146.0 254.3,152.7 260,160 C265.7,167.3 271.5,177.5 277,187 C282.5,196.5 287.5,207.0 293,217 C298.5,227.0 303.8,237.8 310,247 C316.2,256.2 321.7,266.2 330,272 C338.3,277.8 349.5,280.2 360,282 C370.5,283.8 383.5,289.5 393,283 C402.5,276.5 409.7,248.0 417,243 C424.3,238.0 430.3,245.7 437,253 C443.7,260.3 451.0,276.3 457,287 C463.0,297.7 467.5,308.2 473,317 C478.5,325.8 484.3,333.3 490,340 C495.7,346.7 500.3,352.5 507,357 C513.7,361.5 521.7,364.0 530,367 C538.3,370.0 549.0,372.7 557,375 C565.0,377.3 571.3,382.3 578,381 C584.7,379.7 591.7,371.8 597,367 C602.3,362.2 605.7,354.3 610,352 C614.3,349.7 618.5,354.5 623,353 C627.5,351.5 632.5,347.3 637,343 C641.5,338.7 645.7,327.5 650,327 C654.3,326.5 658.2,335.7 663,340 C667.8,344.3 673.7,348.5 679,353 C684.3,357.5 686.5,364.3 695,367 C703.5,369.7 717.0,368.5 730,369 C743.0,369.5 761.3,372.7 773,370 C784.7,367.3 791.7,355.2 800,353 C808.3,350.8 815.2,355.3 823,357 C830.8,358.7 837.5,359.7 847,363 C856.5,366.3 868.7,373.2 880,377 C891.3,380.8 905.0,383.8 915,386 C925.0,388.2 931.7,390.0 940,390 C948.3,390.0 957.5,386.7 965,386 C972.5,385.3 979.7,385.3 985,386 C990.3,386.7 992.8,387.3 997,390 C1001.2,392.7 1006.2,395.8 1010,402 C1013.8,408.2 1018.3,422.8 1020,427" fill="none" stroke="#c01c1c" stroke-width="1.1" stroke-linejoin="round" stroke-linecap="round"/>
<path d="M13,180 C15.3,180.8 20.3,185.0 27,185 C33.7,185.0 45.8,179.7 53,180 C60.2,180.3 66.0,184.5 70,187 C74.0,189.5 71.5,197.8 77,195 C82.5,192.2 96.3,176.3 103,170 C109.7,163.7 110.3,159.0 117,157 C123.7,155.0 133.0,157.0 143,158 C153.0,159.0 167.5,158.2 177,163 C186.5,167.8 193.3,184.5 200,187 C206.7,189.5 209.8,180.5 217,178 C224.2,175.5 235.3,170.8 243,172 C250.7,173.2 256.3,174.8 263,185 C269.7,195.2 277.3,221.2 283,233 C288.7,244.8 292.5,248.5 297,256 C301.5,263.5 305.0,272.5 310,278 C315.0,283.5 318.7,287.0 327,289 C335.3,291.0 349.0,290.7 360,290 C371.0,289.3 384.2,287.5 393,285 C401.8,282.5 407.3,276.3 413,275 C418.7,273.7 422.5,271.2 427,277 C431.5,282.8 435.0,301.2 440,310 C445.0,318.8 451.5,322.2 457,330 C462.5,337.8 467.5,350.7 473,357 C478.5,363.3 481.7,365.3 490,368 C498.3,370.7 514.7,369.8 523,373 C531.3,376.2 534.3,383.8 540,387 C545.7,390.2 549.8,391.3 557,392 C564.2,392.7 574.2,392.3 583,391 C591.8,389.7 601.0,386.7 610,384 C619.0,381.3 630.3,378.2 637,375 C643.7,371.8 644.7,365.5 650,365 C655.3,364.5 662.3,370.7 669,372 C675.7,373.3 684.3,370.5 690,373 C695.7,375.5 694.7,384.5 703,387 C711.3,389.5 728.3,388.3 740,388 C751.7,387.7 764.7,386.8 773,385 C781.3,383.2 784.3,379.2 790,377 C795.7,374.8 798.7,371.8 807,372 C815.3,372.2 828.3,374.5 840,378 C851.7,381.5 866.7,390.8 877,393 C887.3,395.2 895.7,389.0 902,391 C908.3,393.0 910.3,401.8 915,405 C919.7,408.2 925.0,410.0 930,410 C935.0,410.0 939.2,406.3 945,405 C950.8,403.7 959.2,401.2 965,402 C970.8,402.8 974.7,408.3 980,410 C985.3,411.7 992.5,408.7 997,412 C1001.5,415.3 1003.2,420.3 1007,430 C1010.8,439.7 1017.8,463.3 1020,470" fill="none" stroke="#c030d0" stroke-width="1.3" stroke-linejoin="round" stroke-linecap="round"/>
<path d="M13,177 C18.0,177.5 34.7,179.0 43,180 C51.3,181.0 57.3,181.3 63,183 C68.7,184.7 71.3,190.5 77,190 C82.7,189.5 88.7,184.5 97,180 C105.3,175.5 118.2,166.8 127,163 C135.8,159.2 140.7,157.2 150,157 C159.3,156.8 174.2,159.3 183,162 C191.8,164.7 197.3,170.8 203,173 C208.7,175.2 210.3,175.2 217,175 C223.7,174.8 236.3,171.7 243,172 C249.7,172.3 252.5,173.7 257,177 C261.5,180.3 265.0,185.3 270,192 C275.0,198.7 282.0,207.8 287,217 C292.0,226.2 295.0,237.0 300,247 C305.0,257.0 309.8,270.3 317,277 C324.2,283.7 333.0,284.5 343,287 C353.0,289.5 367.0,292.0 377,292 C387.0,292.0 396.3,289.0 403,287 C409.7,285.0 413.0,280.7 417,280 C421.0,279.3 422.7,280.0 427,283 C431.3,286.0 438.0,293.0 443,298 C448.0,303.0 452.0,306.0 457,313 C462.0,320.0 467.5,332.2 473,340 C478.5,347.8 481.7,354.5 490,360 C498.3,365.5 512.8,368.2 523,373 C533.2,377.8 542.7,385.8 551,389 C559.3,392.2 565.3,392.2 573,392 C580.7,391.8 588.7,389.3 597,388 C605.3,386.7 616.3,385.8 623,384 C629.7,382.2 632.0,379.0 637,377 C642.0,375.0 646.3,372.7 653,372 C659.7,371.3 670.0,372.2 677,373 C684.0,373.8 687.3,375.3 695,377 C702.7,378.7 712.7,382.2 723,383 C733.3,383.8 745.8,382.8 757,382 C768.2,381.2 781.7,379.5 790,378 C798.3,376.5 798.7,372.0 807,373 C815.3,374.0 830.3,380.3 840,384 C849.7,387.7 855.8,393.3 865,395 C874.2,396.7 886.7,393.0 895,394 C903.3,395.0 907.5,399.3 915,401 C922.5,402.7 931.7,403.5 940,404 C948.3,404.5 958.3,403.5 965,404 C971.7,404.5 974.2,405.3 980,407 C985.8,408.7 995.0,410.7 1000,414 C1005.0,417.3 1006.7,420.7 1010,427 C1013.3,433.3 1018.3,447.8 1020,452" fill="none" stroke="#f0f0f0" stroke-width="1.1" stroke-linejoin="round" stroke-linecap="round"/>
<path d="M57,107 C62.5,108.5 78.7,113.5 90,116 C101.3,118.5 115.5,120.7 125,122 C134.5,123.3 139.5,123.0 147,124 C154.5,125.0 160.7,126.3 170,128 C179.3,129.7 190.8,132.2 203,134 C215.2,135.8 230.7,136.3 243,139 C255.3,141.7 265.8,145.7 277,150 C288.2,154.3 299.0,159.7 310,165 C321.0,170.3 331.8,176.5 343,182 C354.2,187.5 365.8,193.3 377,198 C388.2,202.7 399.0,205.8 410,210 C421.0,214.2 432.5,217.7 443,223 C453.5,228.3 462.3,235.5 473,242 C483.7,248.5 497.5,257.0 507,262 C516.5,267.0 521.7,268.2 530,272 C538.3,275.8 548.2,280.3 557,285 C565.8,289.7 571.0,295.3 583,300 C595.0,304.7 615.7,309.7 629,313 C642.3,316.3 650.7,317.0 663,320 C675.3,323.0 690.2,328.2 703,331 C715.8,333.8 728.3,335.0 740,337 C751.7,339.0 761.8,341.2 773,343 C784.2,344.8 795.8,346.3 807,348 C818.2,349.7 826.2,351.0 840,353 C853.8,355.0 873.3,357.3 890,360 C906.7,362.7 925.5,366.5 940,369 C954.5,371.5 966.7,373.3 977,375 C987.3,376.7 994.8,377.0 1002,379 C1009.2,381.0 1017.0,385.7 1020,387" fill="none" stroke="#16dde6" stroke-width="2.3" stroke-linejoin="round" stroke-linecap="round"/>
</g>
<rect x="12.5" y="107.5" width="1281" height="429" fill="none" stroke="#f4f4f4" stroke-width="1"/>
<path d="M1030.5 108 L1040.5 108 L1035.5 113.5 Z" fill="#a4acb4"/>
<path d="M17 112 L24 112 L20.5 116 Z" fill="#e8e8e8"/>
<text x="28" y="119" font-family="Liberation Sans" font-size="10" fill="#e8e8e8" textLength="197" lengthAdjust="spacingAndGlyphs" xml:space="preserve">EURUSD,H1  1.08022 1.08077 1.07848 1.08075</text>
<line x1="1293" y1="174" x2="1297" y2="174" stroke="#f0f0f0"/>
<text x="1299" y="177.7" font-family="Liberation Sans" font-size="10" fill="#f2f2f2" textLength="33" lengthAdjust="spacingAndGlyphs">1.09100</text>
<line x1="1293" y1="207" x2="1297" y2="207" stroke="#f0f0f0"/>
<text x="1299" y="210.7" font-family="Liberation Sans" font-size="10" fill="#f2f2f2" textLength="33" lengthAdjust="spacingAndGlyphs">1.08980</text>
<line x1="1293" y1="239.5" x2="1297" y2="239.5" stroke="#f0f0f0"/>
<text x="1299" y="243.2" font-family="Liberation Sans" font-size="10" fill="#f2f2f2" textLength="33" lengthAdjust="spacingAndGlyphs">1.08865</text>
<line x1="1293" y1="272" x2="1297" y2="272" stroke="#f0f0f0"/>
<text x="1299" y="275.7" font-family="Liberation Sans" font-size="10" fill="#f2f2f2" textLength="33" lengthAdjust="spacingAndGlyphs">1.08750</text>
<line x1="1293" y1="306" x2="1297" y2="306" stroke="#f0f0f0"/>
<text x="1299" y="309.7" font-family="Liberation Sans" font-size="10" fill="#f2f2f2" textLength="33" lengthAdjust="spacingAndGlyphs">1.08630</text>
<line x1="1293" y1="338" x2="1297" y2="338" stroke="#f0f0f0"/>
<text x="1299" y="341.7" font-family="Liberation Sans" font-size="10" fill="#f2f2f2" textLength="33" lengthAdjust="spacingAndGlyphs">1.08515</text>
<line x1="1293" y1="372" x2="1297" y2="372" stroke="#f0f0f0"/>
<text x="1299" y="375.7" font-family="Liberation Sans" font-size="10" fill="#f2f2f2" textLength="33" lengthAdjust="spacingAndGlyphs">1.08395</text>
<line x1="1293" y1="403.5" x2="1297" y2="403.5" stroke="#f0f0f0"/>
<text x="1299" y="407.2" font-family="Liberation Sans" font-size="10" fill="#f2f2f2" textLength="33" lengthAdjust="spacingAndGlyphs">1.08280</text>
<line x1="1293" y1="436.5" x2="1297" y2="436.5" stroke="#f0f0f0"/>
<text x="1299" y="440.2" font-family="Liberation Sans" font-size="10" fill="#f2f2f2" textLength="33" lengthAdjust="spacingAndGlyphs">1.08165</text>
<line x1="1293" y1="469.5" x2="1297" y2="469.5" stroke="#f0f0f0"/>
<text x="1299" y="473.2" font-family="Liberation Sans" font-size="10" fill="#f2f2f2" textLength="33" lengthAdjust="spacingAndGlyphs">1.08050</text>
<line x1="1293" y1="500.5" x2="1297" y2="500.5" stroke="#f0f0f0"/>
<text x="1299" y="504.2" font-family="Liberation Sans" font-size="10" fill="#f2f2f2" textLength="33" lengthAdjust="spacingAndGlyphs">1.07935</text>
<line x1="1293" y1="533.5" x2="1297" y2="533.5" stroke="#f0f0f0"/>
<text x="1299" y="537.2" font-family="Liberation Sans" font-size="10" fill="#f2f2f2" textLength="33" lengthAdjust="spacingAndGlyphs">1.07820</text>
<rect x="1294" y="137.5" width="41" height="10" fill="#1e701e"/>
<text x="1299" y="146.2" font-family="Liberation Sans" font-size="10" fill="#0c2e0c" textLength="33" lengthAdjust="spacingAndGlyphs">1.09210</text>
<rect x="1294" y="277.5" width="41" height="10" fill="#c4c4c4"/>
<text x="1299" y="286.2" font-family="Liberation Sans" font-size="10" fill="#404040" textLength="33" lengthAdjust="spacingAndGlyphs">1.08712</text>
<rect x="1294" y="416" width="41" height="10" fill="#a83535"/>
<text x="1299" y="424.7" font-family="Liberation Sans" font-size="10" fill="#e07070" textLength="33" lengthAdjust="spacingAndGlyphs">1.08215</text>
<rect x="1294" y="456.5" width="41" height="10" fill="#ffffff"/>
<text x="1299" y="465.2" font-family="Liberation Sans" font-size="10" fill="#000000" textLength="33" lengthAdjust="spacingAndGlyphs">1.08075</text>
<rect x="1294" y="503.5" width="41" height="10" fill="#a83535"/>
<text x="1299" y="512.2" font-family="Liberation Sans" font-size="10" fill="#e07070" textLength="33" lengthAdjust="spacingAndGlyphs">1.07908</text>
<line x1="13.2" y1="536" x2="13.2" y2="540" stroke="#f0f0f0"/>
<text x="12.7" y="549.6" font-family="Liberation Sans" font-size="10" fill="#f2f2f2" textLength="50.5" lengthAdjust="spacingAndGlyphs">11 Feb 2020</text>
<line x1="76.1" y1="536" x2="76.1" y2="540" stroke="#f0f0f0"/>
<text x="75.6" y="549.6" font-family="Liberation Sans" font-size="10" fill="#f2f2f2" textLength="53.6" lengthAdjust="spacingAndGlyphs">11 Feb 16:00</text>
<line x1="139.1" y1="536" x2="139.1" y2="540" stroke="#f0f0f0"/>
<text x="138.6" y="549.6" font-family="Liberation Sans" font-size="10" fill="#f2f2f2" textLength="53.6" lengthAdjust="spacingAndGlyphs">12 Feb 00:00</text>
<line x1="202.0" y1="536" x2="202.0" y2="540" stroke="#f0f0f0"/>
<text x="201.5" y="549.6" font-family="Liberation Sans" font-size="10" fill="#f2f2f2" textLength="53.6" lengthAdjust="spacingAndGlyphs">12 Feb 08:00</text>
<line x1="264.9" y1="536" x2="264.9" y2="540" stroke="#f0f0f0"/>
<text x="264.4" y="549.6" font-family="Liberation Sans" font-size="10" fill="#f2f2f2" textLength="53.6" lengthAdjust="spacingAndGlyphs">12 Feb 16:00</text>
<line x1="327.8" y1="536" x2="327.8" y2="540" stroke="#f0f0f0"/>
<text x="327.3" y="549.6" font-family="Liberation Sans" font-size="10" fill="#f2f2f2" textLength="53.6" lengthAdjust="spacingAndGlyphs">13 Feb 00:00</text>
<line x1="390.8" y1="536" x2="390.8" y2="540" stroke="#f0f0f0"/>
<text x="390.3" y="549.6" font-family="Liberation Sans" font-size="10" fill="#f2f2f2" textLength="53.6" lengthAdjust="spacingAndGlyphs">13 Feb 08:00</text>
<line x1="453.7" y1="536" x2="453.7" y2="540" stroke="#f0f0f0"/>
<text x="453.2" y="549.6" font-family="Liberation Sans" font-size="10" fill="#f2f2f2" textLength="53.6" lengthAdjust="spacingAndGlyphs">13 Feb 16:00</text>
<line x1="516.6" y1="536" x2="516.6" y2="540" stroke="#f0f0f0"/>
<text x="516.1" y="549.6" font-family="Liberation Sans" font-size="10" fill="#f2f2f2" textLength="53.6" lengthAdjust="spacingAndGlyphs">14 Feb 00:00</text>
<line x1="579.6" y1="536" x2="579.6" y2="540" stroke="#f0f0f0"/>
<text x="579.1" y="549.6" font-family="Liberation Sans" font-size="10" fill="#f2f2f2" textLength="53.6" lengthAdjust="spacingAndGlyphs">14 Feb 08:00</text>
<line x1="642.5" y1="536" x2="642.5" y2="540" stroke="#f0f0f0"/>
<text x="642.0" y="549.6" font-family="Liberation Sans" font-size="10" fill="#f2f2f2" textLength="53.6" lengthAdjust="spacingAndGlyphs">14 Feb 16:00</text>
<line x1="705.4" y1="536" x2="705.4" y2="540" stroke="#f0f0f0"/>
<text x="704.9" y="549.6" font-family="Liberation Sans" font-size="10" fill="#f2f2f2" textLength="53.6" lengthAdjust="spacingAndGlyphs">17 Feb 00:00</text>
<line x1="768.4" y1="536" x2="768.4" y2="540" stroke="#f0f0f0"/>
<text x="767.9" y="549.6" font-family="Liberation Sans" font-size="10" fill="#f2f2f2" textLength="53.6" lengthAdjust="spacingAndGlyphs">17 Feb 08:00</text>
<line x1="831.3" y1="536" x2="831.3" y2="540" stroke="#f0f0f0"/>
<text x="830.8" y="549.6" font-family="Liberation Sans" font-size="10" fill="#f2f2f2" textLength="53.6" lengthAdjust="spacingAndGlyphs">17 Feb 16:00</text>
<line x1="894.2" y1="536" x2="894.2" y2="540" stroke="#f0f0f0"/>
<text x="893.7" y="549.6" font-family="Liberation Sans" font-size="10" fill="#f2f2f2" textLength="53.6" lengthAdjust="spacingAndGlyphs">18 Feb 00:00</text>
<line x1="957.2" y1="536" x2="957.2" y2="540" stroke="#f0f0f0"/>
<text x="956.7" y="549.6" font-family="Liberation Sans" font-size="10" fill="#f2f2f2" textLength="53.6" lengthAdjust="spacingAndGlyphs">18 Feb 08:00</text>
<line x1="1020.1" y1="536" x2="1020.1" y2="540" stroke="#f0f0f0"/>
<text x="1019.6" y="549.6" font-family="Liberation Sans" font-size="10" fill="#f2f2f2" textLength="53.6" lengthAdjust="spacingAndGlyphs">18 Feb 16:00</text>
<g font-family="Liberation Sans">
<text x="1133" y="141.5" font-size="10.5" fill="#6e6e6e" text-anchor="end">cja</text>
<text x="1145" y="141.5" font-size="8.5" font-weight="bold" fill="#9a9a9a" text-anchor="middle">M1</text>
<text x="1165" y="141.5" font-size="8.5" font-weight="bold" fill="#9a9a9a" text-anchor="middle">M5</text>
<text x="1184.5" y="141.5" font-size="8.5" font-weight="bold" fill="#9a9a9a" text-anchor="middle">M15</text>
<text x="1204" y="141.5" font-size="8.5" font-weight="bold" fill="#9a9a9a" text-anchor="middle">M30</text>
<text x="1224" y="141.5" font-size="8.5" font-weight="bold" fill="#9a9a9a" text-anchor="middle">H1</text>
<text x="1244" y="141.5" font-size="8.5" font-weight="bold" fill="#9a9a9a" text-anchor="middle">H4</text>
<text x="1263.5" y="141.5" font-size="8.5" font-weight="bold" fill="#9a9a9a" text-anchor="middle">D1</text>
<text x="1133" y="150.5" font-size="9" fill="#8a8a8a" text-anchor="end">MACD</text>
<text x="1133" y="158" font-size="9" fill="#8a8a8a" text-anchor="end">STR</text>
<text x="1133" y="165.8" font-size="9" fill="#8a8a8a" text-anchor="end">EMA</text>
<rect x="1136.7" y="145.7" width="16.6" height="4.7" fill="#2ee82e"/>
<rect x="1136.7" y="153.5" width="16.6" height="4.7" fill="#2ee82e"/>
<rect x="1136.7" y="161" width="16.6" height="4.7" fill="#2ee82e"/>
<rect x="1156.7" y="145.7" width="16.6" height="4.7" fill="#168a16"/>
<rect x="1156.7" y="153.5" width="16.6" height="4.7" fill="#2ee82e"/>
<rect x="1156.7" y="161" width="16.6" height="4.7" fill="#2ee82e"/>
<rect x="1176.5" y="145.7" width="16.6" height="4.7" fill="#f01c1c"/>
<rect x="1176.5" y="153.5" width="16.6" height="4.7" fill="#f01c1c"/>
<rect x="1176.5" y="161" width="16.6" height="4.7" fill="#f01c1c"/>
<rect x="1196" y="145.7" width="16.6" height="4.7" fill="#f01c1c"/>
<rect x="1196" y="153.5" width="16.6" height="4.7" fill="#f01c1c"/>
<rect x="1196" y="161" width="16.6" height="4.7" fill="#f01c1c"/>
<rect x="1215.7" y="145.7" width="16.6" height="4.7" fill="#f01c1c"/>
<rect x="1215.7" y="153.5" width="16.6" height="4.7" fill="#f01c1c"/>
<rect x="1215.7" y="161" width="16.6" height="4.7" fill="#f01c1c"/>
<rect x="1235.7" y="145.7" width="16.6" height="4.7" fill="#f01c1c"/>
<rect x="1235.7" y="153.5" width="16.6" height="4.7" fill="#f01c1c"/>
<rect x="1235.7" y="161" width="16.6" height="4.7" fill="#f01c1c"/>
<rect x="1255.5" y="145.7" width="16.6" height="4.7" fill="#f01c1c"/>
<rect x="1255.5" y="153.5" width="16.6" height="4.7" fill="#f01c1c"/>
<rect x="1255.5" y="161" width="16.6" height="4.7" fill="#f01c1c"/>
<text x="1109" y="206" font-size="49" fill="#14f514" textLength="163" lengthAdjust="spacingAndGlyphs">1.08075</text>
<text x="1239" y="221.3" font-size="15.5" fill="#8a8a8a" text-anchor="end">Spread</text>
<text x="1273" y="221.3" font-size="15.5" font-weight="bold" fill="#ee9a2a" text-anchor="end">11.0</text>
<text x="1239" y="236" font-size="15.5" fill="#8a8a8a" text-anchor="end">Pips to Open</text>
<text x="1273" y="236" font-size="15.5" font-weight="bold" fill="#f25a25" text-anchor="end">-249</text>
<text x="1239" y="250.7" font-size="15.5" fill="#8a8a8a" text-anchor="end">Hi to Low</text>
<text x="1273" y="250.7" font-size="15.5" font-weight="bold" fill="#ee9a2a" text-anchor="end">522</text>
<text x="1239" y="265.3" font-size="15.5" fill="#8a8a8a" text-anchor="end">Daily Av</text>
<text x="1273" y="265.3" font-size="15.5" font-weight="bold" fill="#19e019" text-anchor="end">372.0</text>
</g>
</svg>

<!-- tabs -->
<div class="a" style="left:8px;top:557px;width:1331px;height:43px;background:#f0f0f0"></div>
<div class="a" style="left:9px;top:557px;width:1330px;height:2px;background:#a4a4a4"></div><div class="a" style="left:9px;top:578px;width:1330px;height:4px;background:#f7f7f7"></div><div class="a" style="left:9px;top:582px;width:1330px;height:1px;background:#cacaca"></div><div class="a" style="left:8px;top:559px;width:2px;height:19px;background:#9a9a9a"></div>
<div class="a" style="left:97px;top:558px;width:82px;height:20px;background:#fff;border:1px solid #5a5a5a;border-top:1px solid #9a9a9a;border-bottom:2px solid #3a3a3a"></div>
<svg class="a" style="left:0;top:557px" width="1343" height="26"><g font-family="Liberation Sans" font-size="11.5">
<text x="25" y="14.5" fill="#8e8e8e" textLength="60" lengthAdjust="spacingAndGlyphs">BTCUSD,H1</text>
<text x="107.5" y="14.5" fill="#262626" textLength="59.2" lengthAdjust="spacingAndGlyphs">EURUSD,H1</text>
<text x="190" y="14.5" fill="#8e8e8e" textLength="56" lengthAdjust="spacingAndGlyphs">EURJPY,H4</text>
<text x="269" y="14.5" fill="#8e8e8e" textLength="60.5" lengthAdjust="spacingAndGlyphs">GBPUSD,H4</text>
<text x="351" y="14.5" fill="#8e8e8e" textLength="56.7" lengthAdjust="spacingAndGlyphs">GBPJPY,H1</text>
<text x="430.6" y="14.5" fill="#8e8e8e" textLength="56" lengthAdjust="spacingAndGlyphs">USDJPY,H1</text>
<text x="510.4" y="14.5" fill="#8e8e8e" textLength="62.6" lengthAdjust="spacingAndGlyphs">USDCAD,H4</text>
<text x="594.7" y="14.5" fill="#8e8e8e" textLength="61.7" lengthAdjust="spacingAndGlyphs">XAUUSD,H4</text>
<text x="679.3" y="14.5" fill="#8e8e8e" textLength="58" lengthAdjust="spacingAndGlyphs">CADJPY,H1</text>
<text x="760.6" y="14.5" fill="#8e8e8e" textLength="60.4" lengthAdjust="spacingAndGlyphs">EURGBP,H4</text>
<text x="844" y="14.5" fill="#8e8e8e" textLength="61" lengthAdjust="spacingAndGlyphs">AUDUSD,H1</text>
<text x="930" y="14.5" fill="#8e8e8e" textLength="64" lengthAdjust="spacingAndGlyphs">NZDUSD,H4</text>
<text x="1016" y="14.5" fill="#8e8e8e" textLength="64.8" lengthAdjust="spacingAndGlyphs">NZDCHF,H4</text>
<text x="1103.9" y="14.5" fill="#8e8e8e" textLength="59" lengthAdjust="spacingAndGlyphs">AUDJPY,H4</text>
<text x="1186.3" y="14.5" fill="#8e8e8e" textLength="58.4" lengthAdjust="spacingAndGlyphs">NZDJPY,H1</text>
</g><defs><clipPath id="uc"><rect x="1266" y="0" width="36" height="26"/></clipPath></defs>
<text x="1267.8" y="14.5" font-family="Liberation Sans" font-size="11.5" fill="#8e8e8e" clip-path="url(#uc)" textLength="62" lengthAdjust="spacingAndGlyphs">USDCHF,H1</text>
<rect x="259" y="6" width="1" height="14" fill="#8a8a8a"/>
<rect x="341" y="6" width="1" height="14" fill="#8a8a8a"/>
<rect x="420" y="6" width="1" height="14" fill="#8a8a8a"/>
<rect x="498" y="6" width="1" height="14" fill="#8a8a8a"/>
<rect x="585" y="6" width="1" height="14" fill="#8a8a8a"/>
<rect x="668" y="6" width="1" height="14" fill="#8a8a8a"/>
<rect x="750" y="6" width="1" height="14" fill="#8a8a8a"/>
<rect x="833" y="6" width="1" height="14" fill="#8a8a8a"/>
<rect x="920" y="6" width="1" height="14" fill="#8a8a8a"/>
<rect x="1006" y="6" width="1" height="14" fill="#8a8a8a"/>
<rect x="1092" y="6" width="1" height="14" fill="#8a8a8a"/>
<rect x="1175" y="6" width="1" height="14" fill="#8a8a8a"/>
<rect x="1258" y="6" width="1" height="14" fill="#8a8a8a"/>
<path d="M1307 10.5l4-3v6z" fill="#a8a8a8"/><path d="M1327 7.5l4 3-4 3z" fill="#111"/>
</svg>
<!-- terminal -->
<div class="t" style="left:12px;top:584px;font-size:11px;color:#111;font-weight:bold">&#215;</div>
<div class="a" style="left:9px;top:596px;width:13px;height:4px;background:#c5d6ea"></div>
<div class="a" style="left:23px;top:583px;width:1313px;height:17px;background:#fff;border-top:1px solid #e0e0e0;border-left:1px solid #d0d0d0"></div>
<div class="t hd" style="left:30px">Order</div>
<div class="t hd" style="left:70px;color:#888;font-size:10px;top:591px">/</div>
<div class="vs" style="left:152px"></div>
<div class="t hd" style="left:301px">Time</div>
<div class="vs" style="left:333px"></div>
<div class="t hd" style="left:392px">Type</div>
<div class="vs" style="left:422px"></div>
<div class="t hd" style="left:467px">Size</div>
<div class="vs" style="left:492px"></div>
<div class="t hd" style="left:537px">Symbol</div>
<div class="vs" style="left:582px"></div>
<div class="t hd" style="left:650px">Price</div>
<div class="vs" style="left:682px"></div>
<div class="t hd" style="left:752px">S / L</div>
<div class="vs" style="left:780px"></div>
<div class="t hd" style="left:850px">T / P</div>
<div class="vs" style="left:880px"></div>
<div class="t hd" style="left:948px">Price</div>
<div class="vs" style="left:980px"></div>
<div class="t hd" style="left:1007px">Commission</div>
<div class="vs" style="left:1080px"></div>
<div class="t hd" style="left:1145px">Swap</div>
<div class="vs" style="left:1179px"></div>
<div class="t hd" style="left:1301px">Profit</div>
<div class="a" style="left:1339px;top:21px;width:4px;height:579px;background:#f2b867"></div>
</body></html>
